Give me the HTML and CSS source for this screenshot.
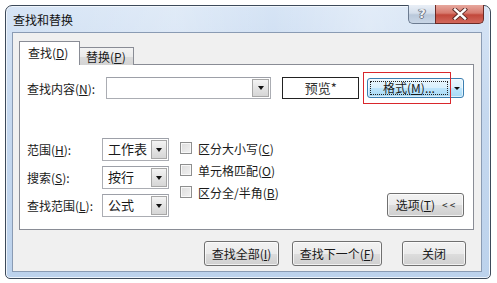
FILE: index.html
```html
<!doctype html>
<html>

<head>
    <meta charset="utf-8">
    <title>查找和替换</title>
    <link rel="stylesheet" href="styles.css">
</head>

<body>
    <div class="window">
        <div class="titlebar">
            <span class="title">查找和替换</span>
            <div class="caption-btns">
                <span class="cap-help">?</span>
                <span class="cap-close">
                    <svg width="16" height="12" viewBox="0 0 16 12">
                        <path d="M3 1.5 L13 10.5 M13 1.5 L3 10.5" stroke="#5a2a26" stroke-width="4.2" stroke-linecap="square" fill="none"/>
                        <path d="M3 1.5 L13 10.5 M13 1.5 L3 10.5" stroke="#fff" stroke-width="2.4" stroke-linecap="square" fill="none"/>
                    </svg>
                </span>
            </div>
        </div>

        <div class="client">
            <!-- 标签页 -->
            <div class="tabs">
                <span class="tab active">查找(<u>D</u>)</span>
                <span class="tab">替换(<u>P</u>)</span>
            </div>

            <div class="tabpage">
                <div class="find-row">
                    <span class="find-label">查找内容(<u>N</u>):</span>
                    <div class="combo combo-find">
                        <span class="combo-text"></span>
                        <span class="combo-arrow"><i class="tri"></i></span>
                    </div>
                    <div class="preview">预览*</div>
                    <div class="format-wrap">
                        <div class="split-btn">
                            <span class="split-main"><span class="focus">格式(<u>M</u>)...</span></span>
                            <span class="split-arrow"><i class="tri"></i></span>
                        </div>
                        <div class="highlight"></div>
                    </div>
                </div>

                <div class="options">
                    <div class="opt-grid">
                        <span class="opt-label">范围(<u>H</u>):</span>
                        <div class="combo combo-opt">
                            <span class="combo-text">工作表</span>
                            <span class="combo-arrow"><i class="tri"></i></span>
                        </div>
                        <span class="opt-label">搜索(<u>S</u>):</span>
                        <div class="combo combo-opt">
                            <span class="combo-text">按行</span>
                            <span class="combo-arrow"><i class="tri"></i></span>
                        </div>
                        <span class="opt-label">查找范围(<u>L</u>):</span>
                        <div class="combo combo-opt">
                            <span class="combo-text">公式</span>
                            <span class="combo-arrow"><i class="tri"></i></span>
                        </div>
                    </div>

                    <div class="checks">
                        <label class="check"><span class="box"></span>区分大小写(<u>C</u>)</label>
                        <label class="check"><span class="box"></span>单元格匹配(<u>O</u>)</label>
                        <label class="check"><span class="box"></span>区分全/半角(<u>B</u>)</label>
                    </div>

                    <span class="btn btn-toggle">选项(<u>T</u>)<span class="chev">&lt; &lt;</span></span>
                </div>
            </div>

            <div class="actions">
                <span class="btn btn-all">查找全部(<u>I</u>)</span>
                <span class="btn btn-next">查找下一个(<u>F</u>)</span>
                <span class="btn btn-close">关闭</span>
            </div>
        </div>
    </div>
</body>

</html>
```

FILE: styles.css
```css
* {
    box-sizing: border-box;
}

body {
    margin: 0;
    background: #fff;
    font-family: "Noto Sans CJK SC", "Noto Sans", sans-serif;
    font-size: 12px;
    color: #1a1a1a;
}

u {
    text-decoration: underline;
    text-underline-offset: 1px;
}

/* 窗口外框 */
.window {
    margin: 5px 0 0 5px;
    width: 486px;
    height: 274px;
    border: 1px solid #3d4a5a;
    border-radius: 7px 7px 5px 5px;
    background: linear-gradient(180deg, #d6e4f5 0%, #c5d8ef 40%, #bcd2ec 100%);
    box-shadow: inset 0 0 0 1px #eef4fb;
    display: flex;
    flex-direction: column;
}

.titlebar {
    height: 26px;
    display: flex;
    align-items: flex-start;
    background: linear-gradient(90deg, rgba(255,255,255,0) 0%, rgba(255,255,255,.25) 35%, rgba(255,255,255,0) 55%, rgba(255,255,255,.3) 75%, rgba(255,255,255,0) 100%);
}

.title {
    margin: 6px 0 0 7px;
    line-height: 16px;
    font-size: 12px;
    color: #111;
}

.caption-btns {
    margin-left: auto;
    margin-right: 6px;
    margin-top: -1px;
    display: flex;
    height: 19px;
}

.cap-help {
    width: 27px;
    height: 19px;
    border: 1px solid #6c7b90;
    border-top: none;
    border-right: none;
    border-radius: 0 0 0 5px;
    background: linear-gradient(180deg, #e9eff7 0%, #d4deeb 45%, #b9c8da 55%, #c9d6e6 100%);
    color: #eef1f5;
    font-family: "DejaVu Sans", sans-serif;
    font-size: 13px;
    font-weight: bold;
    line-height: 18px;
    text-align: center;
    text-shadow: 0 0 1px #4d5664, 1px 0 0 #7a8392, -1px 0 0 #7a8392, 0 1px 0 #7a8392;
}

.cap-close {
    width: 49px;
    height: 19px;
    border: 1px solid #6b2b26;
    border-top: none;
    border-radius: 0 0 5px 0;
    background: linear-gradient(180deg, #e7a89e 0%, #d77a6e 45%, #c2483b 55%, #d2685c 100%);
    display: flex;
    align-items: center;
    justify-content: center;
}

/* 客户区 */
.client {
    margin: 0 7px 5px 6px;
    width: 470px;
    height: 240px;
    border: 1px solid #8a9bb3;
    background: #f0f0f0;
    display: flex;
    flex-direction: column;
}

.tabs {
    display: flex;
    align-items: flex-end;
    margin: 8px 0 -1px 6px;
}

.tab {
    position: relative;
    height: 18px;
    width: 55px;
    margin-left: -1px;
    border: 1px solid #898c95;
    border-bottom: none;
    background: linear-gradient(180deg, #f3f3f3 0%, #ebebeb 50%, #dcdcdc 51%, #d4d4d4 100%);
    line-height: 17px;
    padding-left: 6px;
}

.tab.active {
    z-index: 1;
    margin-left: 0;
    width: 61px;
    height: 24px;
    background: #fff;
    line-height: 22px;
    padding-left: 8px;
}

.tabpage {
    margin-left: 6px;
    width: 455px;
    height: 166px;
    border: 1px solid #898c95;
    background: #fff;
    padding: 12px 9px 0 7px;
}

.find-row {
    display: flex;
    align-items: center;
    height: 22px;
}

.find-label {
    width: 79px;
}

.combo {
    display: flex;
    border: 1px solid #abadb3;
    border-top-color: #9da0a8;
    background: #fff;
}

.combo-find {
    width: 167px;
    height: 22px;
}

.combo-text {
    flex: 1;
    padding-left: 6px;
    line-height: 20px;
    font-size: 12px;
}

.combo-arrow {
    width: 17px;
    margin: 1px;
    border: 1px solid #a7a7a7;
    background: linear-gradient(180deg, #f4f4f4 0%, #e4e4e4 50%, #d6d6d6 100%);
    display: flex;
    align-items: center;
    justify-content: center;
}

.tri {
    width: 0;
    height: 0;
    border-left: 3.5px solid transparent;
    border-right: 3.5px solid transparent;
    border-top: 4px solid #111;
}

.preview {
    margin-left: 11px;
    width: 77px;
    height: 22px;
    border: 1px solid #222;
    background: #fff;
    text-align: center;
    line-height: 20px;
    font-size: 13px;
    color: #333;
}

.format-wrap {
    position: relative;
    margin-left: 8px;
}

.split-btn {
    display: flex;
    height: 20px;
    width: 97px;
    border: 1px solid #3c7fb1;
    border-radius: 3px;
    background: linear-gradient(180deg, #eaf6fd 0%, #d9f0fc 50%, #bee6fd 51%, #a7d9f5 100%);
    box-shadow: inset 0 0 0 1px rgba(255,255,255,.6);
}

.split-main {
    flex: 1;
    padding: 2px;
    border-right: 1px solid #3c7fb1;
}

.focus {
    display: block;
    height: 14px;
    border: 1px dotted #222;
    text-align: center;
    line-height: 12px;
    font-size: 12px;
}

.split-arrow {
    width: 12px;
    display: flex;
    align-items: center;
    justify-content: center;
}

.split-arrow .tri {
    border-left-width: 3px;
    border-right-width: 3px;
    border-top-width: 3px;
}

/* 红色标注框 */
.highlight {
    position: absolute;
    left: -4px;
    top: -6px;
    width: 88px;
    height: 32px;
    border: 1px solid #d9272c;
}

.options {
    display: flex;
    align-items: flex-end;
    margin-top: 39px;
}

.opt-grid {
    display: grid;
    grid-template-columns: 75px 67px;
    grid-auto-rows: 23px;
    row-gap: 5px;
    align-items: center;
}

.combo-opt {
    height: 23px;
}

.combo-opt .combo-text {
    font-size: 13px;
    padding-left: 5px;
}

.combo-opt .combo-arrow {
    width: 16px;
}

.checks {
    align-self: flex-start;
    margin-top: -1px;
    margin-left: 11px;
    display: flex;
    flex-direction: column;
}

.check {
    display: flex;
    align-items: center;
    height: 22px;
}

.box {
    width: 12px;
    height: 12px;
    margin-right: 6px;
    border: 1px solid #8e8f8f;
    background: linear-gradient(135deg, #dcdcdc 0%, #f2f2f2 100%);
    box-shadow: inset 0 0 0 1px #f8f8f8;
}

.btn {
    display: flex;
    align-items: center;
    justify-content: center;
    border: 1px solid #707070;
    border-radius: 3px;
    background: linear-gradient(180deg, #f2f2f2 0%, #ebebeb 50%, #dddddd 51%, #cfcfcf 100%);
    box-shadow: inset 0 0 0 1px rgba(255,255,255,.7);
    font-size: 12px;
    line-height: 14px;
}

.btn-toggle {
    margin-left: auto;
    width: 77px;
    height: 24px;
}

.chev {
    margin-left: 7px;
    font-size: 10px;
}

.actions {
    display: flex;
    justify-content: flex-end;
    margin-top: 11px;
    padding-right: 15px;
}

.actions .btn {
    height: 25px;
}

.btn-all {
    width: 75px;
}

.btn-next {
    width: 90px;
    margin-left: 13px;
}

.btn-close {
    width: 64px;
    margin-left: 20px;
}
```
